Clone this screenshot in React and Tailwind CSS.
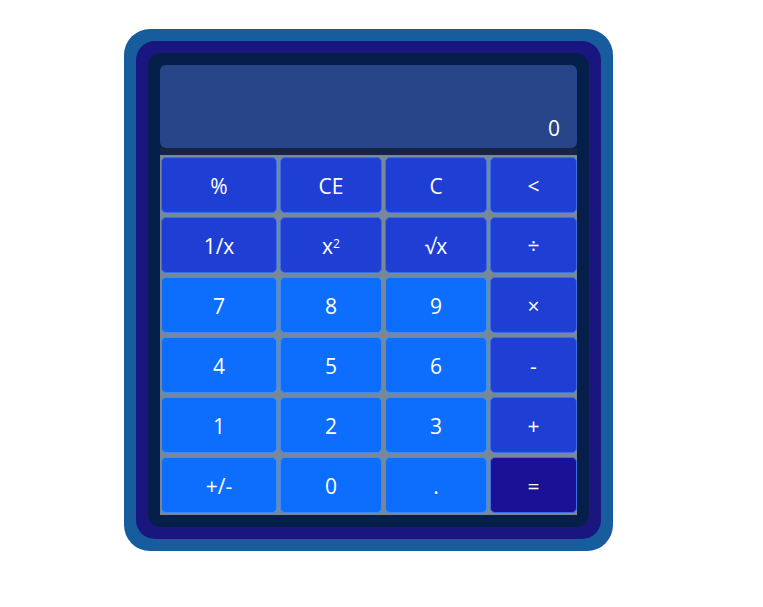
const KEYS = [
  { label: '%', kind: 'op' },
  { label: 'CE', kind: 'op' },
  { label: 'C', kind: 'op' },
  { label: '<', kind: 'op' },
  { label: '1/x', kind: 'op' },
  { label: 'sq', kind: 'op' },
  { label: '√x', kind: 'op' },
  { label: '÷', kind: 'op' },
  { label: '7', kind: 'num' },
  { label: '8', kind: 'num' },
  { label: '9', kind: 'num' },
  { label: '×', kind: 'op' },
  { label: '4', kind: 'num' },
  { label: '5', kind: 'num' },
  { label: '6', kind: 'num' },
  { label: '-', kind: 'op' },
  { label: '1', kind: 'num' },
  { label: '2', kind: 'num' },
  { label: '3', kind: 'num' },
  { label: '+', kind: 'op' },
  { label: '+/-', kind: 'num' },
  { label: '0', kind: 'num' },
  { label: '.', kind: 'num' },
  { label: '=', kind: 'eq' },
]

const styles = {
  op: 'bg-[#1f3fd4] border-[#3a6ee8]',
  num: 'bg-[#0d6efd] border-[#3d8bfd]',
  eq: 'bg-[#1a1196] border-[#3a6ee8]',
}

const Key = ({ label, kind }) => (
  <button
    className={`flex h-[56px] items-center justify-center rounded-[5px] border pt-[3px] text-[21px] text-white ${styles[kind]}`}
  >
    {label === 'sq' ? (
      <span>
        x<sup className="text-[12px]">2</sup>
      </span>
    ) : (
      label
    )}
  </button>
)

export default function App() {
  return (
    <div className="min-h-screen bg-white pl-[124px] pt-[29px]" style={{ fontFamily: '"Open Sans", "Noto Sans", sans-serif' }}>
      <div className="w-[489px] rounded-[26px] bg-[#175c9c] p-3">
        <div className="rounded-[19px] bg-[#1a1680] p-3">
          <div className="rounded-[13px] bg-[#061f4a] p-3">
            {/* display */}
            <div className="flex h-[83px] items-end justify-end rounded-[6px] bg-[#28458a] pb-[4px] pr-[17px] text-[21px] text-white">
              0
            </div>
            <div className="h-[7px] bg-[#172444]" />

            {/* keypad */}
            <div className="grid grid-cols-[116px_102px_102px_87px] gap-x-[3px] gap-y-[4px] bg-[#778899] px-[1px] py-[2px]">
              {KEYS.map((k) => (
                <Key key={k.label} {...k} />
              ))}
            </div>
          </div>
        </div>
      </div>
    </div>
  )
}
